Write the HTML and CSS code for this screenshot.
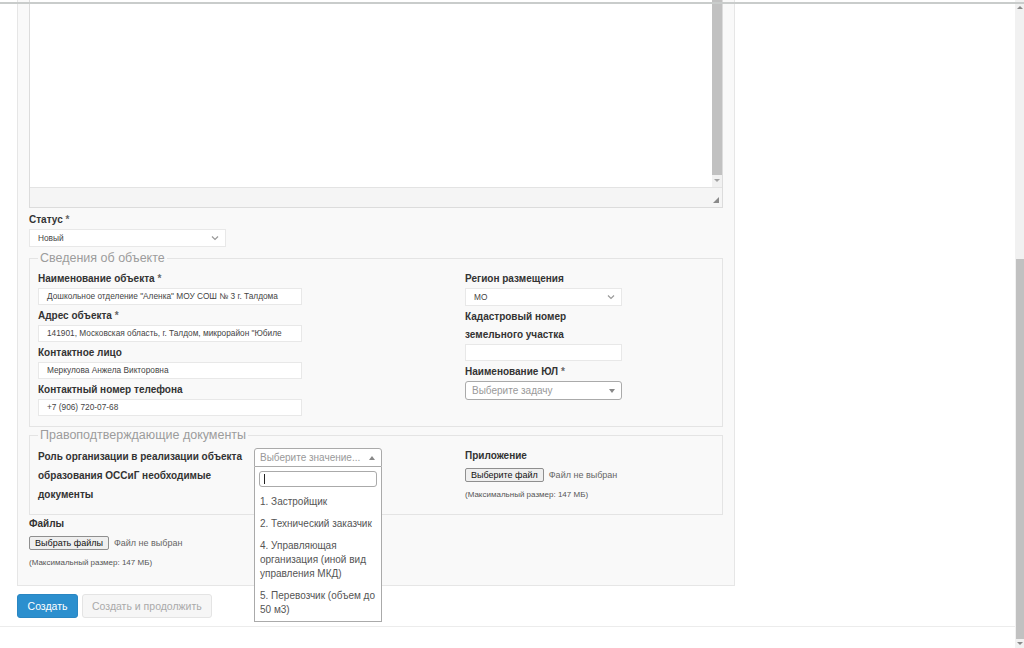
FILE: index.html
```html
<!DOCTYPE html>
<html lang="ru">
<head>
    <meta charset="utf-8" />
    <title>Объект</title>
    <link rel="stylesheet" href="styles.css">
</head>
<body>
    <div class="topShadow"></div>

    <div id="page">
        <div id="contents">
            <div class="box">
                <!-- editor (scrolled up) -->
                <div class="editor">
                    <div class="editorArea">
                        <div class="editorScroll">
                            <div class="editorThumb"></div>
                            <div class="editorArrow"></div>
                        </div>
                    </div>
                    <div class="editorStatus"><span class="resizer"></span></div>
                </div>

                <label class="lbl">Статус <span class="req">*</span></label>
                <div class="select statusSelect">
                    <span>Новый</span>
                    <svg class="chevron" width="8" height="6" viewBox="0 0 8 6"><path d="M1 1.5 L4 4.5 L7 1.5" fill="none" stroke="#999" stroke-width="1.2"/></svg>
                </div>

                <fieldset>
                    <legend>Сведения об объекте</legend>
                    <div class="cols">
                        <div>
                            <label class="lbl">Наименование объекта <span class="req">*</span></label>
                            <div class="input wide">Дошкольное отделение "Аленка" МОУ СОШ № 3 г. Талдома</div>
                            <label class="lbl">Адрес объекта <span class="req">*</span></label>
                            <div class="input wide">141901, Московская область, г. Талдом, микрорайон "Юбиле</div>
                            <label class="lbl">Контактное лицо</label>
                            <div class="input wide">Меркулова Анжела Викторовна</div>
                            <label class="lbl">Контактный номер телефона</label>
                            <div class="input wide">+7 (906) 720-07-68</div>
                        </div>
                        <div>
                            <label class="lbl">Регион размещения</label>
                            <div class="select narrow">
                                <span>МО</span>
                                <svg class="chevron" width="8" height="6" viewBox="0 0 8 6"><path d="M1 1.5 L4 4.5 L7 1.5" fill="none" stroke="#999" stroke-width="1.2"/></svg>
                            </div>
                            <label class="lbl">Кадастровый номер<br>земельного участка</label>
                            <div class="input narrow"></div>
                            <label class="lbl">Наименование ЮЛ <span class="req">*</span></label>
                            <div class="s2 narrow">
                                <span class="placeholder">Выберите задачу</span>
                                <span class="caret down"></span>
                            </div>
                        </div>
                    </div>
                </fieldset>

                <fieldset class="docs">
                    <legend>Правоподтверждающие документы</legend>
                    <div class="cols">
                        <div class="roleRow">
                            <label class="lbl roleLbl">Роль организации в реализации объекта образования ОССиГ необходимые документы</label>
                            <div class="s2wrap">
                                <div class="s2 open">
                                    <span class="placeholder">Выберите значение...</span>
                                    <span class="caret up"></span>
                                </div>
                                <div class="s2drop">
                                    <div class="s2search"><span class="cursor"></span></div>
                                    <ul>
                                        <li>1. Застройщик</li>
                                        <li>2. Технический заказчик</li>
                                        <li>4. Управляющая организация (иной вид управления МКД)</li>
                                        <li>5. Перевозчик (объем до 50 м3)</li>
                                    </ul>
                                </div>
                            </div>
                        </div>
                        <div>
                            <label class="lbl">Приложение</label>
                            <div class="file">
                                <button class="fileBtn">Выберите файл</button>
                                <span>Файл не выбран</span>
                            </div>
                            <div class="hint">(Максимальный размер: 147 МБ)</div>
                        </div>
                    </div>
                </fieldset>

                <label class="lbl">Файлы</label>
                <div class="file">
                    <button class="fileBtn">Выбрать файлы</button>
                    <span>Файл не выбран</span>
                </div>
                <div class="hint">(Максимальный размер: 147 МБ)</div>
            </div>

            <div class="actions">
                <button class="btn primary">Создать</button>
                <button class="btn">Создать и продолжить</button>
            </div>
            <div class="footerLine"></div>
        </div>

        <div class="pageScroll">
            <div class="arrowUp"></div>
            <div class="pageThumb"></div>
            <div class="arrowDown"></div>
        </div>
    </div>
</body>
</html>
```

FILE: styles.css
```css
html, body {
    margin: 0;
    height: 648px;
    overflow: hidden;
    background: #fff;
    font-family: "Liberation Sans", Arial, sans-serif;
    color: #333;
}

.topShadow {
    position: fixed;
    top: 2px;
    left: 0;
    right: 0;
    height: 2px;
    background: #c9cccb;
}

#page {
    display: flex;
    height: 648px;
}

#contents {
    flex: 1;
    padding-left: 17px;
}

.box {
    width: 718px;
    box-sizing: border-box;
    background: #f9f9f9;
    border: 1px solid #e6e6e6;
    border-top: none;
    padding: 0 11px 18px;
}

/* editor */
.editor {
    border: 1px solid #dcdcdc;
    border-top: none;
}

.editorArea {
    height: 187px;
    background: #fff;
    display: flex;
    justify-content: flex-end;
}

.editorScroll {
    width: 10px;
    background: #f1f1f1;
}

.editorThumb {
    height: 175px;
    background: #c1c1c1;
}

.editorArrow {
    margin: 4px auto 0;
    width: 0;
    height: 0;
    border-left: 3px solid transparent;
    border-right: 3px solid transparent;
    border-top: 3px solid #a3a3a3;
}

.editorStatus {
    height: 19px;
    border-top: 1px solid #e3e3e3;
    background: #f5f5f5;
    position: relative;
}

.resizer {
    position: absolute;
    right: 3px;
    bottom: 4px;
    width: 0;
    height: 0;
    border-left: 6px solid transparent;
    border-bottom: 6px solid #8a8a8a;
}

/* labels and inputs */
.lbl {
    display: block;
    font-size: 10px;
    font-weight: bold;
    line-height: 18px;
    color: #333;
}

.box > .lbl:first-of-type {
    margin-top: 3px;
}

.req {
    color: #666;
}

.input, .select {
    box-sizing: border-box;
    height: 17px;
    background: #fff;
    border: 1px solid #e8e8e8;
    font-size: 8.3px;
    line-height: 15px;
    padding: 0 8px;
    white-space: nowrap;
    overflow: hidden;
    color: #444;
    margin-bottom: 2px;
}

.select {
    display: flex;
    justify-content: space-between;
    align-items: center;
    padding: 0 6px 0 8px;
    height: 18px;
}

.statusSelect {
    width: 197px;
    margin-bottom: 3px;
}

.chevron {
    display: block;
}

.wide {
    width: 264px;
}

.narrow {
    width: 157px;
}

fieldset {
    margin: 0;
    border: 1px solid #e4e4e4;
    padding: 4px 8px 8px;
}

legend {
    font-size: 12.5px;
    line-height: 16px;
    color: #9c9c9c;
    padding: 0 2px;
}

.docs {
    padding-bottom: 10px;
}

.cols {
    display: grid;
    grid-template-columns: 427px 1fr;
}

/* select2 look */
.s2 {
    box-sizing: border-box;
    height: 19px;
    border: 1px solid #aaa;
    border-radius: 3px;
    background: #fff;
    display: flex;
    justify-content: space-between;
    align-items: center;
    padding: 0 6px;
    font-size: 10px;
}

.placeholder {
    color: #999;
}

.caret {
    width: 0;
    height: 0;
    border-left: 3px solid transparent;
    border-right: 3px solid transparent;
}

.caret.down {
    border-top: 4px solid #888;
}

.caret.up {
    border-bottom: 4px solid #888;
}

.roleRow {
    display: flex;
    gap: 6px;
}

.roleLbl {
    width: 210px;
    line-height: 19px;
}

.s2wrap {
    position: relative;
    width: 128px;
    margin-top: 1px;
}

.s2.open {
    border-radius: 3px 3px 0 0;
    padding-left: 5px;
}

.s2drop {
    position: absolute;
    top: 19px;
    left: 0;
    right: 0;
    box-sizing: border-box;
    border: 1px solid #aaa;
    border-top: none;
    background: #fff;
    z-index: 5;
}

.s2search {
    margin: 4px;
    height: 16px;
    box-sizing: border-box;
    border: 1px solid #aaa;
    border-radius: 3px;
    padding: 2px 4px;
}

.cursor {
    display: block;
    width: 1px;
    height: 10px;
    background: #222;
}

.s2drop ul {
    list-style: none;
    margin: 0;
    padding: 0;
}

.s2drop li {
    font-size: 10px;
    line-height: 14px;
    padding: 4px 5px;
    color: #555;
}

/* file fields */
.file {
    display: flex;
    align-items: center;
    gap: 5px;
    font-size: 9px;
    color: #666;
    margin-top: 3px;
}

.fileBtn {
    font-family: "Liberation Sans", Arial, sans-serif;
    font-size: 9px;
    height: 14px;
    padding: 0 5px;
    border: 1px solid #8f8f8f;
    border-radius: 2px;
    background: #efefef;
    color: #111;
    line-height: 12px;
}

.hint {
    font-size: 8px;
    color: #555;
    margin-top: 8px;
}

/* buttons */
.actions {
    display: flex;
    gap: 4px;
    margin-top: 8px;
}

.btn {
    font-family: "Liberation Sans", Arial, sans-serif;
    height: 24px;
    font-size: 10.5px;
    padding: 0 9px;
    border: 1px solid #e4e4e4;
    border-radius: 3px;
    background: #f6f6f6;
    color: #aaa;
}

.btn.primary {
    width: 61px;
    background: #2c8fce;
    border-color: #2a86c2;
    color: #fff;
}

.footerLine {
    margin-top: 8px;
    margin-left: -17px;
    border-top: 1px solid #ececec;
}

/* page scrollbar */
.pageScroll {
    width: 9px;
    background: #f1f1f1;
    display: flex;
    flex-direction: column;
    align-items: center;
}

.arrowUp {
    margin-top: 6px;
    width: 0;
    height: 0;
    border-left: 3px solid transparent;
    border-right: 3px solid transparent;
    border-bottom: 3px solid #8a8a8a;
}

.pageThumb {
    margin-top: 250px;
    width: 8px;
    height: 380px;
    background: #c1c1c1;
}

.arrowDown {
    margin-top: 3px;
    width: 0;
    height: 0;
    border-left: 3px solid transparent;
    border-right: 3px solid transparent;
    border-top: 3px solid #8a8a8a;
}
```
